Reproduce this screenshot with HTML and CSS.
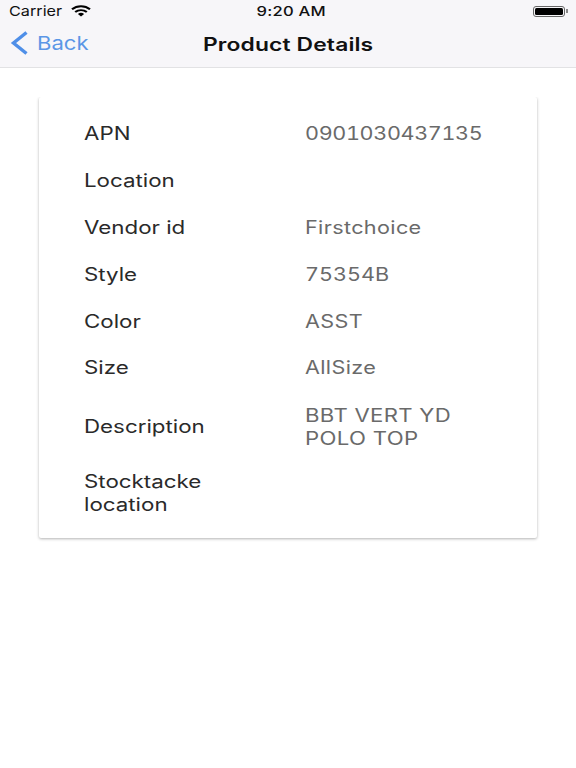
FILE: index.html
```html
<!DOCTYPE html>
<html lang="en">
<head>
<meta charset="utf-8">
<title>Product Details</title>
<link rel="stylesheet" href="styles.css">
</head>
<body>
<header class="top">
  <div class="status">
    <div class="status-left">
      <span class="wide">Carrier</span>
      <svg class="wifi" viewBox="0 0 20 14" width="20" height="12" preserveAspectRatio="none"><path d="M1 5a13 13 0 0 1 18 0" fill="none" stroke="#000" stroke-width="2.2"/><path d="M4.2 8.2a8.5 8.5 0 0 1 11.6 0" fill="none" stroke="#000" stroke-width="2.2"/><path d="M10 13.5 6.9 10.6a4.6 4.6 0 0 1 6.2 0z" fill="#000"/></svg>
    </div>
    <div class="status-time">9:20 AM</div>
    <div class="status-right">
      <span class="battery"><span class="battery-fill"></span></span><span class="battery-tip"></span>
    </div>
  </div>
  <nav class="nav">
    <a class="back">
      <svg viewBox="0 0 18 24" width="18" height="24"><path d="M16.5 1.5 3.5 12l13 10.5" fill="none" stroke="#4f8fe8" stroke-width="3.4"/></svg>
      <span class="wide back-label">Back</span>
    </a>
    <h1>Product Details</h1>
  </nav>
</header>
<main class="card">
  <div class="row"><div class="key">APN</div><div class="val apn">0901030437135</div></div>
  <div class="row"><div class="key">Location</div><div class="val"></div></div>
  <div class="row"><div class="key">Vendor id</div><div class="val">Firstchoice</div></div>
  <div class="row"><div class="key">Style</div><div class="val style-no">75354B</div></div>
  <div class="row"><div class="key">Color</div><div class="val">ASST</div></div>
  <div class="row"><div class="key">Size</div><div class="val">AllSize</div></div>
  <div class="row row-desc"><div class="key">Description</div><div class="val">BBT VERT YD<br>POLO TOP</div></div>
  <div class="row row-stock"><div class="key">Stocktacke<br>location</div><div class="val"></div></div>
</main>
</body>
</html>
```
FILE: styles.css
```css
* { box-sizing: border-box; }
html, body { margin: 0; height: 100%; background: #fff; }
body { font-family: Inter, "Liberation Sans", sans-serif; overflow: hidden; }
.wide { display: inline-block; transform: scaleX(1.2); transform-origin: left center; }
.back-label { transform: scaleX(1.16); }
.top { height: 68px; background: #f7f6f9; border-bottom: 1px solid #e2e2e4; }
.status { height: 22px; padding: 0 8px 0 9px; display: grid; grid-template-columns: 1fr auto 1fr; align-items: center; font-size: 13.5px; color: #111; }
.status-left { display: flex; align-items: center; gap: 18px; }
.status-time { font-weight: 500; letter-spacing: 0.2px; transform: scaleX(1.23); margin-left: 5px; }
.status-right { display: flex; align-items: center; width: 35px; justify-self: end; }
.battery { width: 32px; height: 11px; border: 1px solid #666; border-radius: 3px; padding: 1px; display: block; flex: none; }
.battery-fill { display: block; height: 100%; background: #000; border-radius: 1.5px; }
.battery-tip { width: 1.5px; height: 4px; background: #888; margin-left: 1px; }
.nav { height: 45px; display: flex; align-items: center; justify-content: center; position: relative; }
.nav h1 { margin: 0; font-size: 18px; font-weight: 600; color: #111; letter-spacing: 0.1px; transform: scaleX(1.27); }
.back { position: absolute; left: 10px; top: 9px; display: flex; align-items: center; gap: 9px; color: #5b96e6; font-size: 19px; }
.card { margin: 29px 39px 0; padding: 13px 0 14px; background: #fff; border-radius: 2px; box-shadow: 0 1px 3px rgba(0,0,0,.3); clip-path: inset(0 -6px -6px -6px); }
.row { display: flex; align-items: center; min-height: 46.9px; padding-left: 45px; font-size: 18px; line-height: 23px; }
.key { width: 221px; color: #2a2a2a; transform: scaleX(1.24); transform-origin: left center; }
.val { color: #6a6a6a; letter-spacing: 0.3px; font-variant-numeric: tabular-nums; transform: scaleX(1.2); transform-origin: left center; }
.apn { letter-spacing: -0.3px; }
.style-no { letter-spacing: 0; }
.row-desc { min-height: 70px; }
.row-desc .val { padding-top: 2px; transform: scaleX(1.23); }
.row-stock { min-height: 63px; }
```
